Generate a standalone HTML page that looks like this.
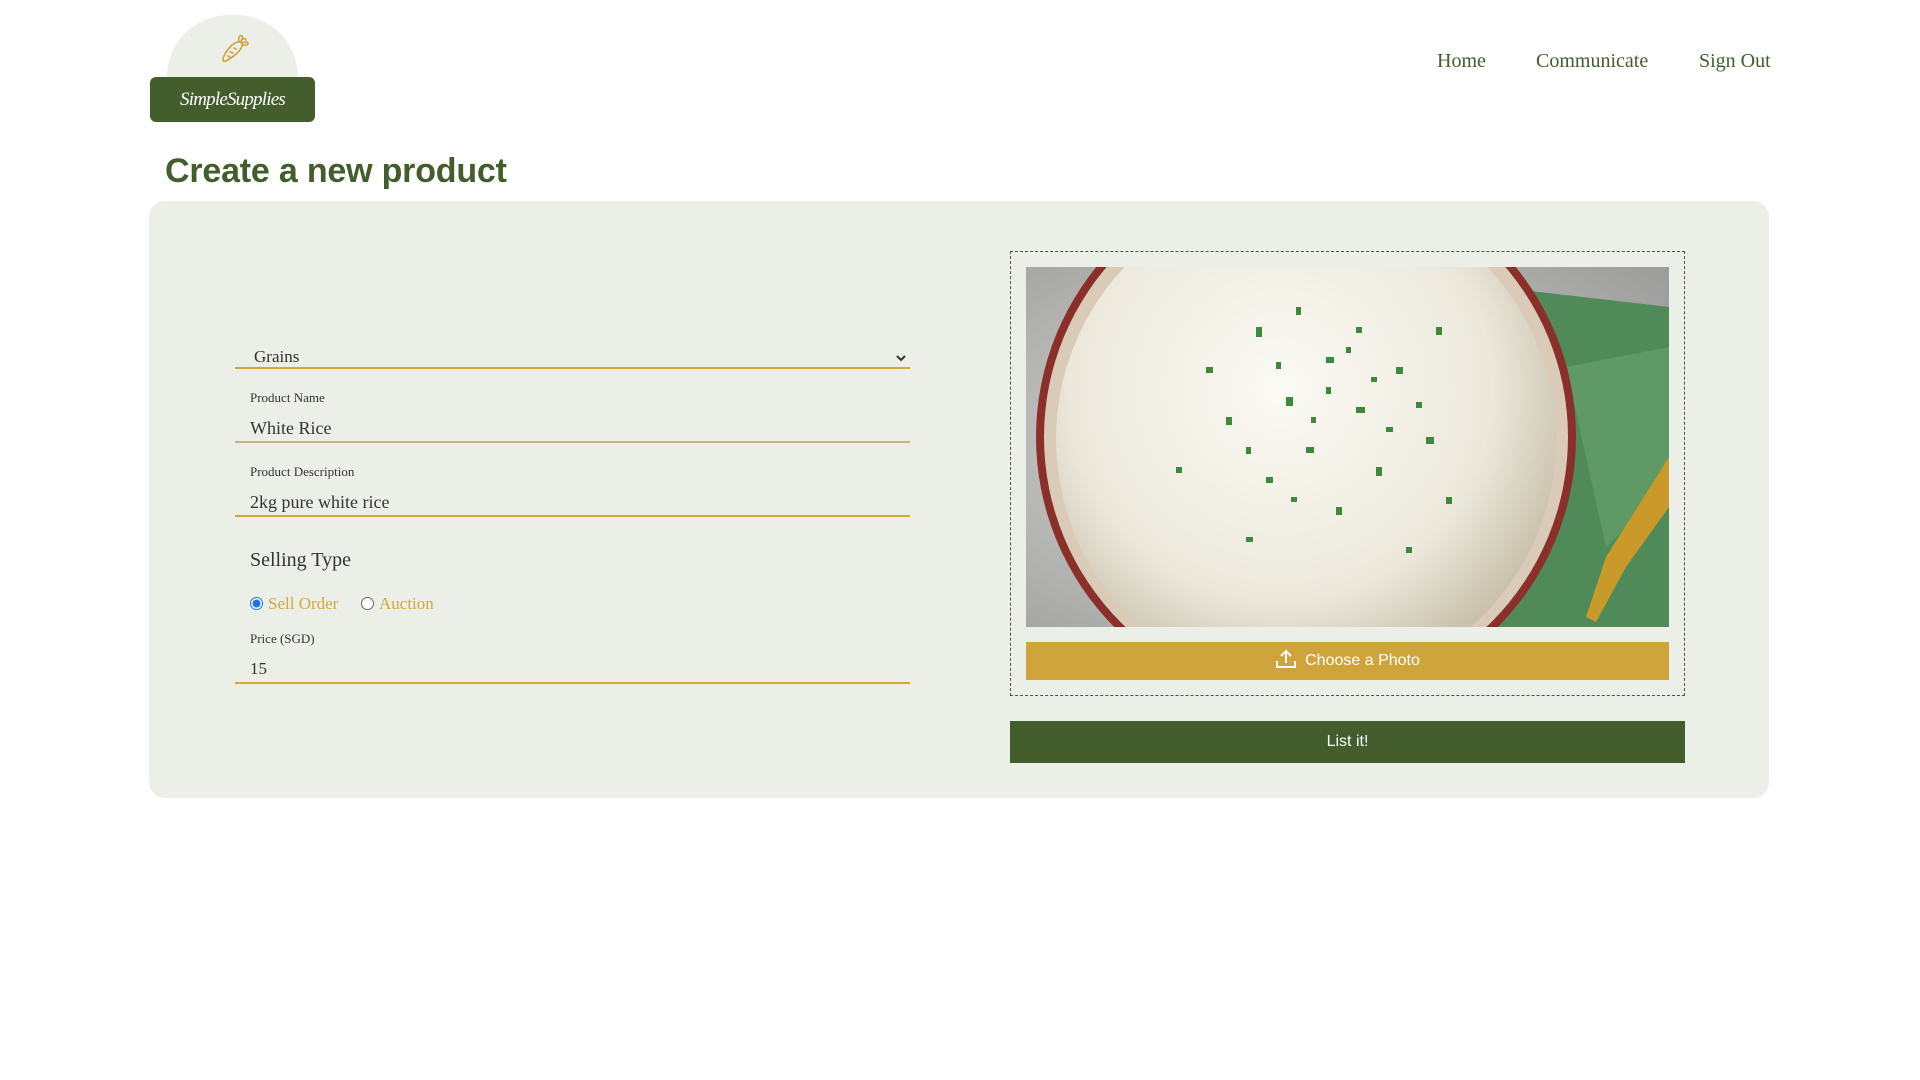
<!DOCTYPE html>
<html><head><meta charset="utf-8"><style>
*{margin:0;padding:0;box-sizing:border-box}
body{width:1920px;height:1080px;background:#fff;position:relative;font-family:"Liberation Serif",serif;overflow:hidden}
.abs{position:absolute}
.nav{top:50px;font-size:20px;color:#435e2c}
.card{left:149px;top:201px;width:1620px;height:597px;background:#eceee8;border-radius:16px}
.lbl{font-size:13px;color:#333}
.val{font-size:18px;color:#333}
.line{height:1.5px;background:#d4a73a;left:235px;width:675px}
.rad{width:13px;height:13px;border-radius:50%;border:1px solid #666;background:#fff}
</style></head><body>
<div class="abs" style="left:167px;top:15px;width:131px;height:62px;border-radius:66px 66px 0 0;background:#eceee8"></div>
<svg class="abs" style="left:216px;top:32px" width="36" height="36" viewBox="0 0 36 36" fill="none" stroke="#cfa43c" stroke-width="1.6" stroke-linecap="round">
<path d="M22 10 C18 10 12 16 8 24 C6 28 7 30 10 29 C16 26 24 20 26 14 C27 11 25 10 22 10Z"/>
<path d="M23 9 C22 5 24 3 26 4 C27 6 26 8 25 9"/><path d="M26 11 C30 9 32 10 32 12 C30 14 28 13 27 13"/><path d="M25 9 C27 6 30 6 30 8"/>
<path d="M14 20 L17 21 M12 24 L14 25 M18 16 L20 17"/></svg>
<div class="abs" style="left:150px;top:77px;width:165px;height:45px;background:#435e2c;border-radius:6px;color:#fff;font-style:italic;font-size:19px;text-align:center;line-height:45px;font-family:'Liberation Serif',serif;letter-spacing:-0.8px">SimpleSupplies</div>
<div class="abs nav" style="left:1437px">Home</div>
<div class="abs nav" style="left:1536px">Communicate</div>
<div class="abs nav" style="left:1699px">Sign Out</div>
<div class="abs" style="left:165px;top:152px;font-family:'Liberation Sans',sans-serif;font-weight:bold;font-size:34px;color:#435e2c;letter-spacing:-0.2px">Create a new product</div>
<div class="abs card"></div>
<div class="abs val" style="left:254px;top:347px;font-size:17px">Grains</div>
<svg class="abs" style="left:896px;top:354px" width="10" height="8" viewBox="0 0 10 8"><path d="M1 2 L5 6 L9 2" stroke="#333" stroke-width="2" fill="none"/></svg>
<div class="abs line" style="top:367px"></div>
<div class="abs lbl" style="left:250px;top:390px">Product Name</div>
<div class="abs val" style="left:250px;top:418px">White Rice</div>
<div class="abs line" style="top:441px;background:#c9b47a"></div>
<div class="abs lbl" style="left:250px;top:464px">Product Description</div>
<div class="abs val" style="left:250px;top:492px">2kg pure white rice</div>
<div class="abs line" style="top:515px"></div>
<div class="abs" style="left:250px;top:549px;font-size:20px;color:#333">Selling Type</div>
<div class="abs rad" style="left:250px;top:597px;border:1px solid #1a73e8;background:radial-gradient(circle,#1a73e8 3.5px,#fff 4.5px)"></div>
<div class="abs" style="left:268px;top:594px;font-size:17px;color:#d4a73a">Sell Order</div>
<div class="abs rad" style="left:361px;top:597px"></div>
<div class="abs" style="left:379px;top:594px;font-size:17px;color:#d4a73a">Auction</div>
<div class="abs lbl" style="left:250px;top:631px">Price (SGD)</div>
<div class="abs val" style="left:250px;top:659px;font-size:17px">15</div>
<div class="abs line" style="top:682px"></div>
<div class="abs" style="left:1010px;top:251px;width:675px;height:445px;border:1px dashed #435e2c"></div>
<svg class="abs" style="left:1026px;top:267px" width="643" height="360" viewBox="0 0 643 360">
<defs>
<radialGradient id="bg" cx="0.4" cy="0.5" r="0.8"><stop offset="0" stop-color="#d8d8d6"/><stop offset="1" stop-color="#9a9a98"/></radialGradient>
<radialGradient id="rice" cx="0.45" cy="0.4" r="0.6"><stop offset="0" stop-color="#fbfaf4"/><stop offset="0.7" stop-color="#ece8dc"/><stop offset="1" stop-color="#c9c1ac"/></radialGradient>
</defs>
<rect width="643" height="360" fill="url(#bg)"/>
<path d="M470 20 L643 40 L643 360 L430 360 Z" fill="#4f8a58"/>
<path d="M540 100 L643 80 L643 220 L580 280 Z" fill="#6aa370" opacity="0.6"/>
<circle cx="280" cy="170" r="270" fill="#8b2f2a"/>
<circle cx="280" cy="170" r="262" fill="#d9cbb8"/>
<circle cx="280" cy="172" r="250" fill="url(#rice)"/>
<path d="M643 190 L580 290 L560 350 L570 355 L600 300 L643 240 Z" fill="#c99a2a"/>
<g fill="#3f8a3a">
<rect x="230" y="60" width="6" height="10"/><rect x="300" y="90" width="8" height="6"/><rect x="260" y="130" width="7" height="9"/><rect x="330" y="140" width="9" height="6"/><rect x="200" y="150" width="6" height="8"/><rect x="370" y="100" width="7" height="7"/><rect x="280" y="180" width="8" height="6"/><rect x="350" y="200" width="6" height="9"/><rect x="240" y="210" width="7" height="6"/><rect x="400" y="170" width="8" height="7"/><rect x="310" y="240" width="6" height="8"/><rect x="180" y="100" width="7" height="6"/><rect x="420" y="230" width="6" height="7"/><rect x="330" y="60" width="6" height="6"/><rect x="270" y="40" width="5" height="8"/><rect x="410" y="60" width="6" height="8"/><rect x="220" y="270" width="7" height="5"/><rect x="380" y="280" width="6" height="6"/><rect x="300" y="120" width="5" height="7"/><rect x="150" y="200" width="6" height="6"/>
<rect x="250" y="95" width="5" height="7"/><rect x="345" y="110" width="6" height="5"/><rect x="285" y="150" width="5" height="6"/><rect x="360" y="160" width="7" height="5"/><rect x="220" y="180" width="5" height="7"/><rect x="320" y="80" width="5" height="6"/><rect x="390" y="135" width="6" height="6"/><rect x="265" y="230" width="6" height="5"/>
</g>
</svg>
<div class="abs" style="left:1026px;top:642px;width:643px;height:38px;background:#cfa43c;color:#fff;font-family:'Liberation Sans',sans-serif;font-size:16px;text-align:center;line-height:38px">
<svg width="22" height="22" viewBox="0 0 22 22" style="vertical-align:-5px;margin-right:8px" fill="none" stroke="#fff" stroke-width="2"><path d="M11 15 V3 M6 8 L11 3 L16 8 M2 13 V19 H20 V13"/></svg>Choose a Photo</div>
<div class="abs" style="left:1010px;top:721px;width:675px;height:42px;background:#435e2c;color:#fff;font-family:'Liberation Sans',sans-serif;font-size:16px;text-align:center;line-height:42px">List it!</div>
</body></html>
